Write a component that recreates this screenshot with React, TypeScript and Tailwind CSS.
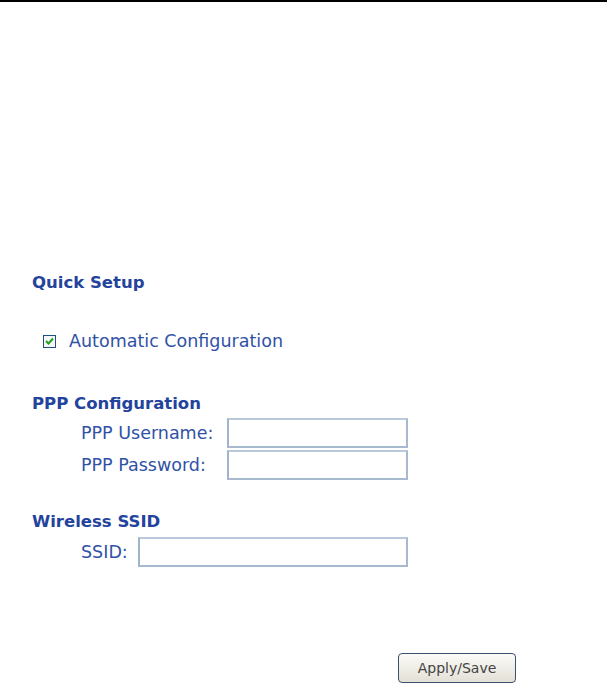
import React from "react";

const Field = ({ label, width, labelWidth }: { label: string; width: string; labelWidth: string }) => (
  <div className="flex items-center h-[32px] pl-[49px]">
    <span className={`${labelWidth} text-[17.5px] text-[#3052a6]`}>{label}</span>
    <input
      type="text"
      className={`${width} h-[30px] border-2 border-[#a7b9cf] border-t-[#b9c8da] border-l-[#9fb3cb] bg-white outline-none`}
    />
  </div>
);

const App = () => {
  return (
    <div className="w-[607px] h-[689px] bg-white overflow-hidden" style={{ fontFamily: '"DejaVu Sans", Tahoma, sans-serif' }}>
      <div className="h-[2px] bg-black" />
      <div className="pl-[32px] pt-[271px]">
        <h2 className="text-[16.5px] font-bold leading-[20px] text-[#23439c]">Quick Setup</h2>

        <label className="flex items-center gap-[13px] mt-[38px] pl-[11px] h-[20px]">
          <span className="w-[13px] h-[13px] border border-[#1c5180] bg-[#f4f6f7] flex items-center justify-center">
            <svg width="9" height="8" viewBox="0 0 9 8">
              <path d="M1 4 L3.5 6.5 L8 1.5" stroke="#21a121" strokeWidth="2" fill="none" />
            </svg>
          </span>
          <span className="text-[17.5px] text-[#3052a6]">Automatic Configuration</span>
        </label>

        <h2 className="text-[16.5px] font-bold leading-[20px] text-[#23439c] mt-[43px] mb-[3px]">PPP Configuration</h2>
        <Field label="PPP Username:" labelWidth="w-[146px]" width="w-[181px]" />
        <Field label="PPP Password:" labelWidth="w-[146px]" width="w-[181px]" />

        <h2 className="text-[16.5px] font-bold leading-[20px] text-[#23439c] mt-[31px] mb-[4px]">Wireless SSID</h2>
        <Field label="SSID:" labelWidth="w-[57px]" width="w-[270px]" />

        <div className="pl-[366px] mt-[85px]">
          <button className="w-[118px] h-[30px] rounded-[4px] border border-[#3c5070] bg-gradient-to-b from-[#fbfbf8] to-[#e3e0d6] text-[14px] text-[#444]">
            Apply/Save
          </button>
        </div>
      </div>
    </div>
  );
};

export default App;
